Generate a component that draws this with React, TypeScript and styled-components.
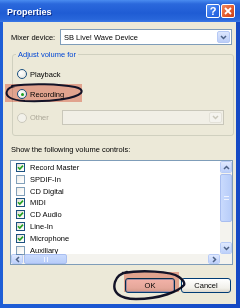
import React from 'react'
import styled, { createGlobalStyle, css } from 'styled-components'

type Control = { name: string; checked: boolean }

const controls: Control[] = [
  { name: 'Record Master', checked: true },
  { name: 'SPDIF-In', checked: false },
  { name: 'CD Digital', checked: false },
  { name: 'MIDI', checked: true },
  { name: 'CD Audio', checked: true },
  { name: 'Line-In', checked: true },
  { name: 'Microphone', checked: true },
  { name: 'Auxiliary', checked: false },
]

const Chevron: React.FC<{ dir?: 'up' | 'down' | 'left' | 'right'; color?: string }> = ({
  dir = 'down',
  color = '#4D6185',
}) => {
  const rot = { down: 0, up: 180, left: 90, right: -90 }[dir]
  return (
    <svg width="7" height="5" viewBox="0 0 7 5" style={{ transform: `rotate(${rot}deg)` }}>
      <path d="M1 1 L3.5 3.5 L6 1" fill="none" stroke={color} strokeWidth="1.5" />
    </svg>
  )
}

export default function App() {
  return (
    <>
      <GlobalStyle />
      <Window>
        <TitleBar>
          <Title>Properties</Title>
          <CaptionButtons>
            <CaptionButton>?</CaptionButton>
            <CaptionButton $close>
              <svg width="8" height="8" viewBox="0 0 8 8">
                <path d="M1 1 L7 7 M7 1 L1 7" stroke="#fff" strokeWidth="1.8" />
              </svg>
            </CaptionButton>
          </CaptionButtons>
        </TitleBar>
        <Body>
          <MixerRow>
            <Label>Mixer device:</Label>
            <Combo $width={172}>
              <ComboText>SB Live! Wave Device</ComboText>
              <ComboArrow>
                <Chevron />
              </ComboArrow>
            </Combo>
          </MixerRow>

          <Group>
            <Legend>Adjust volume for</Legend>
            <RadioRow>
              <Radio />
              <span>Playback</span>
            </RadioRow>
            <RadioRow $gap={8}>
              {/* pink marker + ink loop drawn over the dialog (page coords in viewBox) */}
              <Annotation style={{ left: -12, top: -6, width: 80, height: 22 }} viewBox="4 83 80 22">
                <rect x="5" y="85" width="77" height="18" fill="#F3B2A8" />
                <path
                  d="M12 87 C30 84 60 85 75 88 C80 89 83 91 81 94 C76 99 55 103 25 102 C10 101 5 97 7 92 C8 89 10 88 15 87"
                  fill="none"
                  stroke="#14142E"
                  strokeWidth="2"
                  strokeLinecap="round"
                />
              </Annotation>
              <Radio $checked />
              <span>Recording</span>
            </RadioRow>
            <RadioRow $gap={10} $disabled>
              <Radio $disabled />
              <OtherLabel>Other</OtherLabel>
              <Combo $width={162} $disabled>
                <ComboText />
                <ComboArrow $disabled>
                  <Chevron color="#C9C7BA" />
                </ComboArrow>
              </Combo>
            </RadioRow>
          </Group>

          <Caption>Show the following volume controls:</Caption>

          <ListBox>
            <ListArea>
              <Items>
                {controls.map(c => (
                  <Item key={c.name}>
                    <Check $checked={c.checked}>
                      {c.checked && (
                        <svg width="7" height="7" viewBox="0 0 7 7">
                          <path d="M1 3.2 L2.8 5 L6 1.6" fill="none" stroke="#21A121" strokeWidth="1.6" />
                        </svg>
                      )}
                    </Check>
                    <span>{c.name}</span>
                  </Item>
                ))}
              </Items>
              <VScroll>
                <ScrollButton>
                  <Chevron dir="up" />
                </ScrollButton>
                <VTrack>
                  <VThumb>
                    <Grip />
                  </VThumb>
                </VTrack>
                <ScrollButton>
                  <Chevron dir="down" />
                </ScrollButton>
              </VScroll>
            </ListArea>
            <HScrollRow>
              <HScroll>
                <ScrollButton $h>
                  <Chevron dir="left" />
                </ScrollButton>
                <HTrack>
                  <HThumb>
                    <Grip $h />
                  </HThumb>
                </HTrack>
                <ScrollButton $h>
                  <Chevron dir="right" />
                </ScrollButton>
              </HScroll>
              <Corner />
            </HScrollRow>
          </ListBox>

          <ButtonRow>
            <ButtonSlot>
              <Button $default>OK</Button>
              <Annotation style={{ left: -14, top: -9, width: 76, height: 34 }} viewBox="110 270 76 34">
                <rect x="123" y="273" width="55" height="20" fill="#F3B2A8" />
                <path
                  d="M122 274 C140 271 170 272 178 278 C182 281 184 284 183 286 C178 292 160 300 135 300 C118 300 111 293 114 283 C116 277 119 275 126 273"
                  fill="none"
                  stroke="#14142E"
                  strokeWidth="2.4"
                  strokeLinecap="round"
                />
              </Annotation>
            </ButtonSlot>
            <Button>Cancel</Button>
          </ButtonRow>
        </Body>
      </Window>
    </>
  )
}

const GlobalStyle = createGlobalStyle`
  html, body {
    margin: 0;
    padding: 0;
    background: #fff;
  }
  body {
    font-family: "Liberation Sans", Arial, sans-serif;
    font-size: 7.5px;
    color: #000;
  }
  * {
    box-sizing: border-box;
  }
`

const Window = styled.div`
  width: 240px;
  height: 308px;
  display: flex;
  flex-direction: column;
  background: linear-gradient(to right, #1E5ED6, #1A55D0 50%, #1549C4);
`

const TitleBar = styled.div`
  height: 22px;
  display: flex;
  align-items: center;
  justify-content: space-between;
  padding: 0 5px 0 7px;
  background: linear-gradient(to bottom, #4A8CF0 0%, #2A68DC 18%, #1F5CD4 60%, #2866DA 88%, #3A78E6 100%);
`

const Title = styled.span`
  color: #fff;
  font-weight: bold;
  font-size: 9px;
  text-shadow: 1px 1px 0 #0C2F8A;
  margin-top: 1px;
`

const CaptionButtons = styled.div`
  display: flex;
  gap: 1px;
`

const CaptionButton = styled.div<{ $close?: boolean }>`
  width: 14px;
  height: 14px;
  display: flex;
  align-items: center;
  justify-content: center;
  border: 1px solid #fff;
  border-radius: 2px;
  color: #fff;
  font-weight: bold;
  font-size: 11px;
  background: linear-gradient(135deg, #5A95F5, #2E6BE6 60%, #2460DA);
  ${p =>
    p.$close &&
    css`
      background: linear-gradient(135deg, #F08A62, #E25B2E 55%, #C8401A);
    `}
`

const Body = styled.div`
  flex: 1;
  margin: 0 4px 4px 3px;
  background: #ECE9D8;
  padding: 7px 3px 0 7px;
  display: flex;
  flex-direction: column;
`

const MixerRow = styled.div`
  display: flex;
  align-items: center;
  height: 16px;
`

const Label = styled.span`
  width: 50px;
  padding-left: 1px;
`

const Combo = styled.div<{ $width: number; $disabled?: boolean }>`
  width: ${p => p.$width}px;
  height: 16px;
  display: flex;
  align-items: center;
  background: #fff;
  border: 1px solid #7F9DB9;
  padding: 1px;
  ${p =>
    p.$disabled &&
    css`
      height: 15px;
      background: #F1EFE6;
      border-color: #C9C7BA;
    `}
`

const ComboText = styled.span`
  flex: 1;
  padding-left: 2px;
`

const ComboArrow = styled.div<{ $disabled?: boolean }>`
  width: 13px;
  align-self: stretch;
  display: flex;
  align-items: center;
  justify-content: center;
  border-radius: 2px;
  background: linear-gradient(to bottom, #DCE6FD, #BCCEF8);
  border: 1px solid #B6C9F5;
  ${p =>
    p.$disabled &&
    css`
      background: #F4F3EE;
      border-color: #E3E1D8;
    `}
`

const Group = styled.fieldset`
  margin: 5px -1px 0 2px;
  padding: 0 0 10px 3px;
  border: 1px solid #D0D0BF;
  border-radius: 3px;
  min-width: 0;
`

const Legend = styled.legend`
  padding: 0 2px;
  color: #0046D5;
  line-height: 9px;
`

const RadioRow = styled.div<{ $gap?: number; $disabled?: boolean }>`
  position: relative;
  display: flex;
  align-items: center;
  min-height: 12px;
  margin-top: ${p => p.$gap ?? 9}px;
  color: ${p => (p.$disabled ? '#ACA899' : '#000')};

  span {
    position: relative;
  }
`

const Radio = styled.div<{ $checked?: boolean; $disabled?: boolean }>`
  position: relative;
  width: 10px;
  height: 10px;
  margin: 0 3px 0 1px;
  border-radius: 50%;
  border: 1px solid ${p => (p.$disabled ? '#CAC8BB' : '#1C5180')};
  background: ${p => (p.$disabled ? '#F2F1EA' : 'radial-gradient(circle at 35% 35%, #fff, #E2E1D9)')};

  ${p =>
    p.$checked &&
    css`
      &::after {
        content: '';
        position: absolute;
        left: 2.5px;
        top: 2.5px;
        width: 3px;
        height: 3px;
        border-radius: 50%;
        background: #21A121;
      }
    `}
`

const OtherLabel = styled.span`
  width: 32px;
`

const Annotation = styled.svg`
  position: absolute;
  mix-blend-mode: multiply;
  pointer-events: none;
`

const Caption = styled.div`
  margin: 9px 0 0 1px;
  line-height: 9px;
`

const ListBox = styled.div`
  margin-top: 6px;
  height: 105px;
  border: 1px solid #7F9DB9;
  background: #fff;
  display: flex;
  flex-direction: column;
`

const ListArea = styled.div`
  flex: 1;
  display: flex;
  min-height: 0;
`

const Items = styled.div`
  flex: 1;
  padding-top: 0.5px;
`

const Item = styled.div`
  height: 11.85px;
  display: flex;
  align-items: center;
  padding-left: 5px;
  gap: 5px;
`

const Check = styled.div<{ $checked: boolean }>`
  width: 9px;
  height: 9px;
  display: flex;
  align-items: center;
  justify-content: center;
  border: 1px solid #1C5180;
  background: linear-gradient(135deg, #DCDBD3, #F6F6F3 60%, #fff);
  opacity: ${p => (p.$checked ? 1 : 0.55)};
`

const VScroll = styled.div`
  width: 12px;
  display: flex;
  flex-direction: column;
  background: #F4F3EE;
`

const ScrollButton = styled.div<{ $h?: boolean }>`
  width: ${p => (p.$h ? '12px' : '100%')};
  height: ${p => (p.$h ? '100%' : '12px')};
  flex-shrink: 0;
  display: flex;
  align-items: center;
  justify-content: center;
  border-radius: 2px;
  background: linear-gradient(to bottom, #E0E9FE, #BDD0FA);
  border: 1px solid #FFFFFF;
  outline: 1px solid #B9CCF6;
  outline-offset: -1px;
`

const VTrack = styled.div`
  flex: 1;
  padding: 1px 0;
`

const VThumb = styled.div`
  height: 48px;
  display: flex;
  align-items: center;
  justify-content: center;
  border-radius: 2px;
  border: 1px solid #A9BEF0;
  background: linear-gradient(to right, #C9DAFD, #B8CDF9);
`

const Grip = styled.div<{ $h?: boolean }>`
  width: ${p => (p.$h ? '4px' : '5px')};
  height: ${p => (p.$h ? '5px' : '4px')};
  border-style: solid;
  border-color: #EEF3FE;
  border-width: ${p => (p.$h ? '0 1px' : '1px 0')};
`

const HScrollRow = styled.div`
  height: 10px;
  display: flex;
`

const HScroll = styled.div`
  flex: 1;
  display: flex;
  background: #F4F3EE;
`

const HTrack = styled.div`
  flex: 1;
  padding: 0 1px;
`

const HThumb = styled.div`
  width: 43px;
  height: 100%;
  display: flex;
  align-items: center;
  justify-content: center;
  border-radius: 2px;
  border: 1px solid #A9BEF0;
  background: linear-gradient(to bottom, #C9DAFD, #B8CDF9);
`

const Corner = styled.div`
  width: 12px;
  background: #F4F3EE;
`

const ButtonRow = styled.div`
  display: flex;
  justify-content: flex-end;
  gap: 6px;
  margin-top: 13px;
  padding-right: 2px;
`

const ButtonSlot = styled.div`
  position: relative;
  display: flex;
`

const Button = styled.div<{ $default?: boolean }>`
  width: 50px;
  height: 15px;
  display: flex;
  align-items: center;
  justify-content: center;
  border: 1px solid #003C74;
  border-radius: 3px;
  background: linear-gradient(to bottom, #FFFFFF, #F1F0EA 70%, #DCD8CC);
  ${p =>
    p.$default &&
    css`
      box-shadow: inset 0 0 0 1px #A8C4F0;
    `}
`
